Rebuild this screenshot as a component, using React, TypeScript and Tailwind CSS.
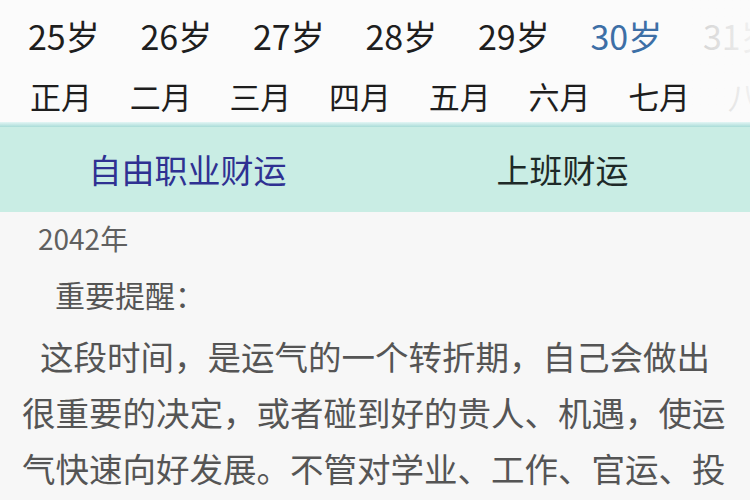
import React from "react";

const ages = ["25岁", "26岁", "27岁", "28岁", "29岁", "30岁", "31岁"];
const months = ["正月", "二月", "三月", "四月", "五月", "六月", "七月", "八月"];

export default function App() {
  return (
    <div
      className="w-[750px] h-[500px] overflow-hidden bg-[#f7f7f7] flex flex-col"
      style={{ fontFamily: '"Noto Sans CJK SC", "Noto Sans", sans-serif' }}
    >
      <div className="relative bg-[#fbfbfb] flex flex-col shrink-0">
        <div className="flex h-[72px] items-center pl-[28px] whitespace-nowrap">
          {ages.map((a) => (
            <div
              key={a}
              className={`w-[112.5px] shrink-0 text-[34px] leading-none ${a === "30岁" ? "text-[#3d6fa6]" : "text-[#1e1e1e]"}`}
            >
              {a}
            </div>
          ))}
        </div>
        <div className="flex h-[50px] items-start pt-[8px] pl-[30px] whitespace-nowrap">
          {months.map((m) => (
            <div key={m} className="w-[99.7px] shrink-0 text-[31px] leading-none text-[#1e1e1e]">
              {m}
            </div>
          ))}
        </div>
        <div className="absolute right-0 top-0 bottom-0 w-[62px] bg-gradient-to-r from-[#fbfbfb]/80 to-[#fbfbfb]/95" />
      </div>
      <div className="h-[5px] shrink-0 bg-gradient-to-b from-[#e3f6f5] to-[#a9dcd8]" />
      <div className="h-[85px] shrink-0 bg-[#c9ede4] flex">
        <div className="flex-1 flex items-center justify-center text-[33px] text-[#2f3192]">自由职业财运</div>
        <div className="flex-1 flex items-center justify-center text-[33px] text-[#1e2a28]">上班财运</div>
      </div>
      <div className="flex flex-col text-[#555555]">
        <div className="pl-[38px] pt-[4px] h-[52px] text-[28px] leading-[44px] text-[#606060]">2042年</div>
        <div className="pl-[55px] h-[64px] text-[30px] leading-[60px]">重要提醒：</div>
        <p className="pl-[22px] pr-[22px] text-[33.5px] leading-[56px] indent-[18px]">
          这段时间，是运气的一个转折期，自己会做出很重要的决定，或者碰到好的贵人、机遇，使运气快速向好发展。不管对学业、工作、官运、投资理财都会有很好的帮助。
        </p>
      </div>
    </div>
  );
}
